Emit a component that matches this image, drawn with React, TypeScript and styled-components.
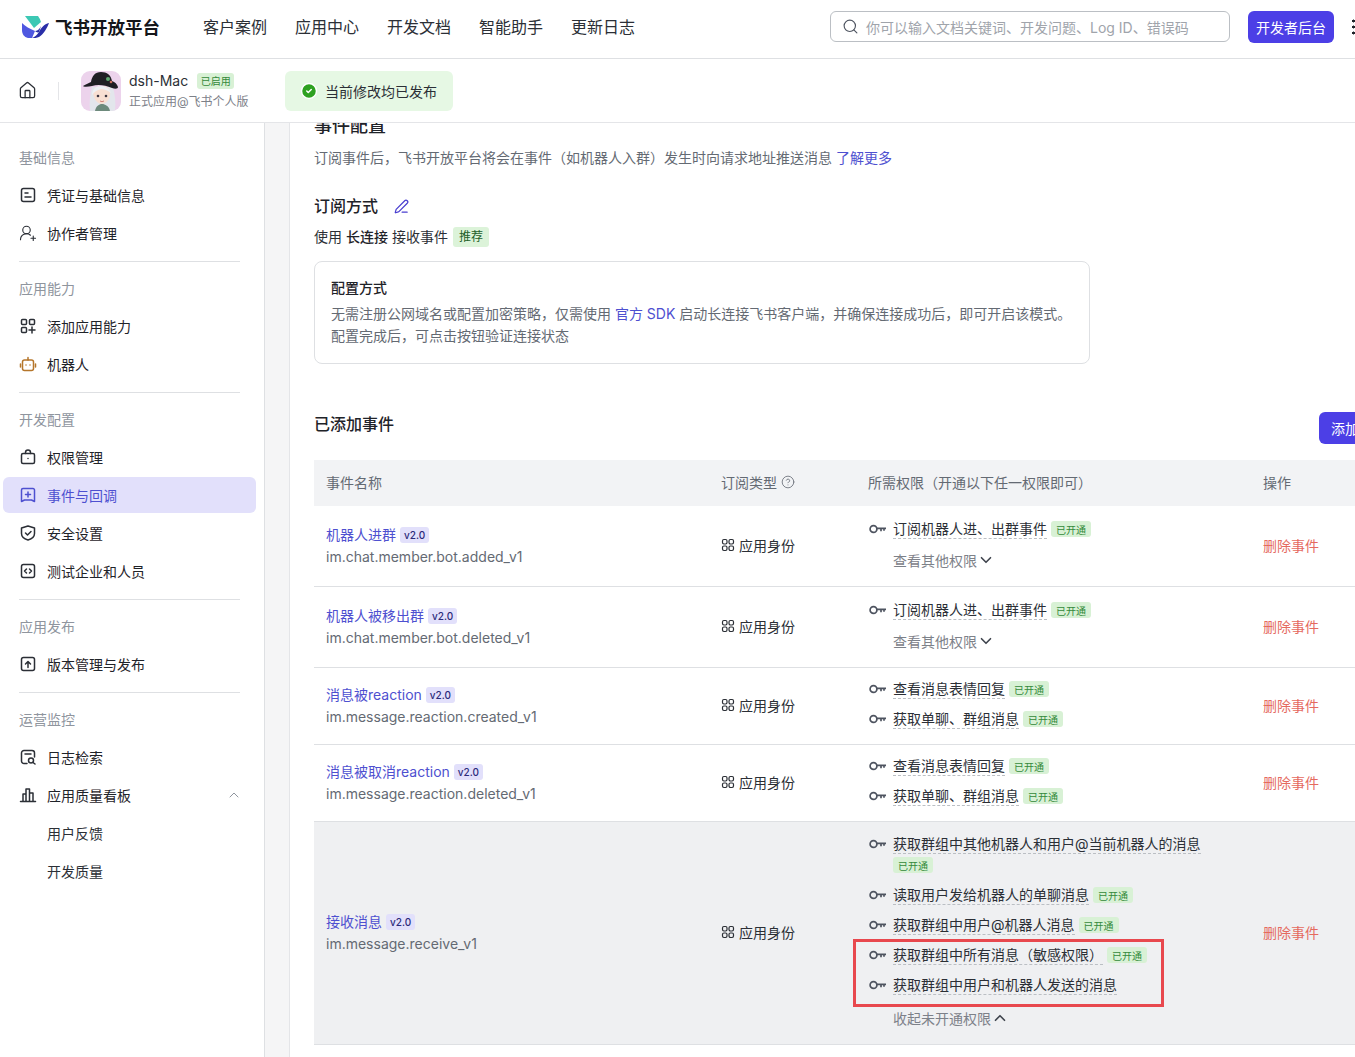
import React from "react";
import styled, { createGlobalStyle } from "styled-components";
import {
  Home,
  Search,
  CircleCheck,
  PenLine,
  CircleHelp,
  ChevronDown,
  ChevronUp,
  UserRoundPlus,
} from "lucide-react";

const FONT = `Inter, "Noto Sans CJK SC", "Noto Sans", sans-serif`;
const PRIMARY = "#4c3fe6";
const LINK = "#4e50d0";

const GlobalStyle = createGlobalStyle`
  html, body {
    margin: 0;
    padding: 0;
    height: 1057px;
    overflow: hidden;
    background: #fff;
    font-family: ${FONT};
    color: #1f2329;
  }
  * { box-sizing: border-box; }
`;

const Page = styled.div`
  width: 1355px;
  height: 1057px;
  display: flex;
  flex-direction: column;
  overflow: hidden;
`;

const TopBar = styled.header`
  height: 59px;
  flex: none;
  display: flex;
  align-items: center;
  padding: 0 0 5px 22px;
  border-bottom: 1px solid #dee0e3;
  white-space: nowrap;
`;

const Brand = styled.div`
  display: flex;
  align-items: center;
  gap: 6px;
  width: 181px;
  font-size: 17.5px;
  font-weight: 700;
  color: #14161a;
`;

const NavLinks = styled.nav`
  display: flex;
  gap: 28px;
  font-size: 16px;
  color: #2b2f36;
  margin-top: -1px;
`;

const SearchBox = styled.div`
  margin-left: auto;
  width: 400px;
  height: 31px;
  border: 1px solid #bbbfc4;
  border-radius: 6px;
  display: flex;
  align-items: center;
  gap: 7px;
  padding-left: 11px;
  font-size: 14px;
  color: #a0a4ab;
`;

const PrimaryButton = styled.div`
  background: ${PRIMARY};
  color: #fff;
  border-radius: 6px;
  font-size: 14px;
  display: flex;
  align-items: center;
  justify-content: center;
`;

const ConsoleButton = styled(PrimaryButton)`
  margin-left: 18px;
  width: 86px;
  height: 32px;
  flex: none;
`;

const MoreDots = styled.div`
  margin-left: 18px;
  width: 3px;
  height: 17px;
  flex: none;
  background: radial-gradient(circle, #1f2329 1.4px, transparent 1.6px) 0 0 / 3px 6px repeat-y;
`;

const AppBar = styled.div`
  height: 64px;
  flex: none;
  display: flex;
  align-items: center;
  padding-left: 18px;
  border-bottom: 1px solid #e4e5e8;
`;

const BarDivider = styled.div`
  width: 1px;
  height: 18px;
  background: #e4e5e8;
  margin: 0 22px 0 21px;
`;

const AppInfo = styled.div`
  display: flex;
  flex-direction: column;
  gap: 2px;
  margin-left: 8px;
  width: 156px;
`;

const AppName = styled.div`
  display: flex;
  align-items: center;
  gap: 9px;
  font-size: 14px;
  line-height: 20px;
  color: #2b2f36;
`;

const GreenTag = styled.span`
  display: inline-flex;
  align-items: center;
  justify-content: center;
  flex: none;
  height: 16px;
  padding: 0 5px;
  border-radius: 3px;
  background: #d8f1d5;
  color: #34893a;
  font-size: 10px;
  font-weight: 400;
`;

const StatusTag = styled(GreenTag)`
  padding: 0 3.5px;
`;

const AppSub = styled.div`
  font-size: 12px;
  line-height: 18px;
  color: #7d8189;
`;

const PublishNotice = styled.div`
  width: 168px;
  height: 40px;
  display: flex;
  align-items: center;
  gap: 7px;
  padding-left: 15px;
  border-radius: 6px;
  background: #e6f8e4;
  font-size: 14px;
  color: #2b2f36;
`;

const Body = styled.div`
  flex: 1;
  display: flex;
  min-height: 0;
`;

const Sidebar = styled.aside`
  width: 265px;
  flex: none;
  border-right: 1px solid #dee0e3;
  padding: 15px 8px 0 3px;
`;

const Gutter = styled.div`
  width: 25px;
  flex: none;
  background: #f5f5f6;
  border-right: 1px solid #e4e5e8;
`;

const SectionTitle = styled.div`
  height: 38px;
  margin-bottom: 1px;
  padding-left: 16px;
  display: flex;
  align-items: center;
  font-size: 14px;
  color: #8f959e;
`;

const SideItem = styled.div<{ $active?: boolean }>`
  height: 36px;
  margin-bottom: 2px;
  padding-left: 16px;
  display: flex;
  align-items: center;
  gap: 10px;
  border-radius: 6px;
  font-size: 14px;
  color: ${(p) => (p.$active ? LINK : "#1f2329")};
  background: ${(p) => (p.$active ? "#e2e0fb" : "transparent")};
  svg { flex: none; }
`;

const SubItem = styled(SideItem)`
  padding-left: 44px;
  color: #2b2f36;
`;

const Collapse = styled.span`
  margin-left: auto;
  margin-right: 14px;
  display: flex;
  color: #8f959e;
`;

const SideDivider = styled.div`
  height: 1px;
  margin: 10px 16px 0;
  background: #dee0e3;
  & + ${SectionTitle} { margin-top: 7px; }
`;

const Main = styled.main`
  flex: 1;
  min-width: 0;
  overflow: hidden;
  padding-left: 24px;
`;

const PageTitle = styled.h2`
  margin: -11px 0 0;
  font-size: 18px;
  line-height: 28px;
  font-weight: 500;
  color: #1f2329;
`;

const Lead = styled.p`
  margin: 7px 0 0;
  font-size: 14px;
  line-height: 22px;
  color: #646a73;
`;

const A = styled.span`
  color: ${LINK};
`;

const SubHeading = styled.div`
  margin-top: 25px;
  display: flex;
  align-items: center;
  gap: 16px;
  font-size: 16px;
  line-height: 24px;
  font-weight: 500;
  color: #1f2329;
`;

const ModeLine = styled.div`
  margin-top: 8px;
  display: flex;
  align-items: center;
  gap: 4px;
  font-size: 14px;
  line-height: 22px;
  color: #2b2f36;
  b { font-weight: 500; color: #1f2329; }
`;

const RecommendTag = styled.span`
  height: 20px;
  margin-left: 1px;
  padding: 0 6px;
  border-radius: 3px;
  background: #dcf3d9;
  color: #1f5f2b;
  font-size: 12px;
  display: inline-flex;
  align-items: center;
`;

const InfoCard = styled.div`
  margin-top: 13px;
  width: 776px;
  height: 103px;
  padding: 16px;
  border: 1px solid #dee0e3;
  border-radius: 8px;
`;

const CardTitle = styled.div`
  font-size: 14px;
  line-height: 20px;
  font-weight: 500;
  color: #1f2329;
`;

const CardText = styled.div`
  margin-top: 5px;
  font-size: 14px;
  line-height: 22px;
  color: #646a73;
  white-space: nowrap;
`;

const AddedRow = styled.div`
  margin-top: 48px;
  height: 32px;
  display: flex;
  align-items: center;
  justify-content: space-between;
`;

const AddedTitle = styled.div`
  font-size: 16px;
  font-weight: 500;
  color: #1f2329;
  margin-top: -10px;
`;

const AddButton = styled(PrimaryButton)`
  width: 100px;
  height: 32px;
  flex: none;
  justify-content: flex-start;
  padding-left: 12px;
  margin-right: -64px;
`;

const Table = styled.div`
  margin-top: 16px;
  width: 1041px;
`;

const Columns = styled.div<{ $head?: boolean; $hl?: boolean; $h?: number }>`
  display: grid;
  grid-template-columns: 395px 147px 395px 1fr;
  align-items: center;
  height: ${(p) => p.$h ?? 46}px;
  background: ${(p) => (p.$head ? "#f2f3f5" : p.$hl ? "#eff0f2" : "#fff")};
  border-bottom: ${(p) => (p.$head ? "none" : "1px solid #dee0e3")};
  ${(p) => (p.$head ? "font-size: 14px; color: #646a73; padding-bottom: 2px;" : "")}
`;

const HeadCell = styled.div`
  padding-left: 12px;
  display: flex;
  align-items: center;
  gap: 4px;
  white-space: nowrap;
`;

const EventCell = styled.div`
  padding-left: 12px;
`;

const EventName = styled.div`
  display: flex;
  align-items: center;
  gap: 4px;
  font-size: 14px;
  line-height: 22px;
  color: ${LINK};
`;

const VersionTag = styled.span`
  height: 16px;
  padding: 0 4px;
  border-radius: 3px;
  background: #e2e0fb;
  color: #2c2a7a;
  font-size: 10px;
  font-weight: 500;
  display: inline-flex;
  align-items: center;
`;

const EventKey = styled.div`
  font-size: 14px;
  line-height: 22px;
  color: #646a73;
`;

const Identity = styled.div`
  display: flex;
  align-items: center;
  gap: 4px;
  padding-left: 12px;
  margin-bottom: 2px;
  font-size: 14px;
  color: #2b2f36;
`;

const PermCell = styled.div<{ $short?: boolean }>`
  position: relative;
  display: flex;
  flex-direction: column;
  align-self: stretch;
  justify-content: center;
  padding: 0 0 ${(p) => (p.$short ? 4 : 2)}px 13px;
`;

const KeyIcon = styled.span`
  display: flex;
  width: 18px;
  flex: none;
`;

const PermRow = styled.div<{ $wrap?: boolean }>`
  display: flex;
  align-items: ${(p) => (p.$wrap ? "flex-start" : "center")};
  gap: 6px;
  height: ${(p) => (p.$wrap ? 50 : 30)}px;
  padding-top: ${(p) => (p.$wrap ? 4 : 0)}px;
  font-size: 14px;
  color: #2b2f36;
  white-space: nowrap;
  ${(p) => (p.$wrap ? "& > span:first-child { margin-top: 5px; }" : "")}
`;

const PermText = styled.span`
  border-bottom: 1px dashed #bbbfc4;
  line-height: 19px;
`;

const RowTag = styled(GreenTag)`
  margin-left: -2px;
`;

const PermWrap = styled.div`
  display: flex;
  flex-direction: column;
  gap: 3px;
  align-items: flex-start;
`;

const MoreLink = styled.div<{ $open?: boolean }>`
  display: flex;
  align-items: center;
  padding-left: 24px;
  height: 32px;
  margin-top: ${(p) => (p.$open ? 2 : 0)}px;
  font-size: 14px;
  color: #7d8189;
  svg { color: #3f444d; }
`;

const Delete = styled.div`
  padding-left: 12px;
  margin-bottom: 2px;
  font-size: 14px;
  color: #e56a5f;
`;

// annotation drawn over the screenshot
const RedMark = styled.div`
  position: absolute;
  left: -3px;
  top: 117px;
  width: 311px;
  height: 68px;
  border: 3px solid #e8484e;
  pointer-events: none;
`;

const Ic = ({ children, size = 18, color = "#2b2f36" }: { children: React.ReactNode; size?: number; color?: string }) => (
  <svg width={size} height={size} viewBox="0 0 18 18" fill="none" stroke={color} strokeWidth={1.5} strokeLinecap="round" strokeLinejoin="round">
    {children}
  </svg>
);

const Logo = () => (
  <svg width="27" height="22" viewBox="0 0 27 22">
    <path d="M3 0h13c1.500 2 2.500 4 3 6l-7 6z" fill="#3cc8b4" />
    <path d="M0 7c3 3 8 6 13 8l-3 7H6c-4-1-6-4-6-8z" fill="#4f58e0" />
    <path d="M10 22c3-1 5-3 7-6 2-4 5-8 10-9-2 5-5 11-10 14-2 1-5 1-7 1z" fill="#2a2fa8" />
    <path d="M13 15c2 0 4-1 6-5l-2 6c-1 1-3 0-4-1z" fill="#2a2fa8" />
  </svg>
);

const Avatar = () => (
  <svg width="40" height="40" viewBox="0 0 40 40">
    <defs>
      <clipPath id="av"><rect width="40" height="40" rx="9" /></clipPath>
    </defs>
    <g clipPath="url(#av)">
      <rect width="40" height="40" fill="#ecd3ec" />
      <path d="M9 40c-1-8 0-16 2-24h21c2 8 3 16 2 24z" fill="#e3e6ec" />
      <path d="M14 40c1-5 4-7 7-7s7 2 8 7z" fill="#6d8a7c" />
      <path d="M12 20c2-4 6-5 9-5s7 1 8 5c1 6-2 12-8 13-5 0-9-6-9-13z" fill="#f8dfd2" />
      <path d="M11 24c0-5 3-9 9-9 4 0 8 2 10 7-4-3-7-4-10-4-4 1-7 3-9 6z" fill="#eef0f4" />
      <path d="M2 15c3-2 6-3 8-4C11 5 14 1 20 1c6 0 10 3 11 9 3 1 5 3 6 6 0 2-3 2-6 1-7-3-14-4-20-2-4 1-9 1-9 0z" fill="#1f1f24" />
      <circle cx="27" cy="8" r="2" fill="#5ea870" />
      <circle cx="30" cy="11" r="1.300" fill="#c96f5a" />
      <circle cx="17" cy="25" r="1.300" fill="#3b3540" />
      <circle cx="25" cy="25" r="1.300" fill="#3b3540" />
      <path d="M19 30q2 1.400 4 0" stroke="#c9766f" strokeWidth=".9" fill="none" />
    </g>
  </svg>
);

const Key = () => (
  <KeyIcon>
    <svg width="18" height="10" viewBox="0 0 18 10" fill="none" stroke="#4e5460" strokeWidth="1.7">
      <circle cx="4.500" cy="5" r="3.400" />
      <path d="M8 4.300h9M12 4.300v3M15 4.300v2.400" />
    </svg>
  </KeyIcon>
);

const AppIdentityIcon = () => (
  <svg width="14" height="14" viewBox="0 0 14 14" fill="none" stroke="#2b2f36" strokeWidth="1.2">
    <rect x="1.500" y="1.500" width="4.500" height="4.500" rx="1.400" />
    <rect x="8" y="1.500" width="4.500" height="4.500" rx="1.400" />
    <rect x="1.500" y="8" width="4.500" height="4.500" rx="1.400" />
    <rect x="8" y="8" width="4.500" height="4.500" rx="1.400" />
  </svg>
);

const Perm = ({ text, opened, wrap }: { text: string; opened?: boolean; wrap?: boolean }) => (
  <PermRow $wrap={wrap}>
    <Key />
    {wrap ? (
      <PermWrap>
        <PermText>{text}</PermText>
        <GreenTag>已开通</GreenTag>
      </PermWrap>
    ) : (
      <>
        <PermText>{text}</PermText>
        {opened && <RowTag>已开通</RowTag>}
      </>
    )}
  </PermRow>
);

const EventRow = ({
  name,
  eventKey,
  h,
  hl,
  children,
}: {
  name: string;
  eventKey: string;
  h: number;
  hl?: boolean;
  children: React.ReactNode;
}) => (
  <Columns $h={h} $hl={hl}>
    <EventCell>
      <EventName>
        {name}
        <VersionTag>v2.0</VersionTag>
      </EventName>
      <EventKey>{eventKey}</EventKey>
    </EventCell>
    <Identity>
      <AppIdentityIcon />
      应用身份
    </Identity>
    <PermCell $short={h === 77}>{children}</PermCell>
    <Delete>删除事件</Delete>
  </Columns>
);

export default function App() {
  return (
    <Page>
      <GlobalStyle />
      <TopBar>
        <Brand>
          <Logo />
          飞书开放平台
        </Brand>
        <NavLinks>
          <span>客户案例</span>
          <span>应用中心</span>
          <span>开发文档</span>
          <span>智能助手</span>
          <span>更新日志</span>
        </NavLinks>
        <SearchBox>
          <Search size={17} color="#4e5460" strokeWidth={1.6} />
          你可以输入文档关键词、开发问题、Log ID、错误码
        </SearchBox>
        <ConsoleButton>开发者后台</ConsoleButton>
        <MoreDots />
      </TopBar>

      <AppBar>
        <Home size={19} color="#2b2f36" strokeWidth={1.6} />
        <BarDivider />
        <Avatar />
        <AppInfo>
          <AppName>
            dsh-Mac
            <StatusTag>已启用</StatusTag>
          </AppName>
          <AppSub>正式应用@飞书个人版</AppSub>
        </AppInfo>
        <PublishNotice>
          <CircleCheck size={18} color="#fff" fill="#2ea121" strokeWidth={2} />
          当前修改均已发布
        </PublishNotice>
      </AppBar>

      <Body>
        <Sidebar>
          <SectionTitle>基础信息</SectionTitle>
          <SideItem>
            <Ic><rect x="2.500" y="2.500" width="13" height="13" rx="2" /><path d="M6 7h3M6 11h6" /></Ic>
            凭证与基础信息
          </SideItem>
          <SideItem>
            <UserRoundPlus size={18} color="#2b2f36" strokeWidth={1.5} />
            协作者管理
          </SideItem>
          <SideDivider />
          <SectionTitle>应用能力</SectionTitle>
          <SideItem>
            <Ic>
              <rect x="2.500" y="2.500" width="5" height="5" rx="1" />
              <rect x="2.500" y="10.500" width="5" height="5" rx="1" />
              <rect x="10.500" y="2.500" width="5" height="5" rx="1" />
              <path d="M13 10v6M10 13h6" />
            </Ic>
            添加应用能力
          </SideItem>
          <SideItem>
            <Ic color="#b5762b">
              <rect x="3.500" y="5" width="11" height="10.500" rx="2" />
              <path d="M9 5V2.500M1.500 9v3M16.500 9v3M7 10h.01M11 10h.01" />
            </Ic>
            机器人
          </SideItem>
          <SideDivider />
          <SectionTitle>开发配置</SectionTitle>
          <SideItem>
            <Ic>
              <rect x="2.500" y="5.500" width="13" height="10" rx="1.500" />
              <path d="M6.500 5.500V4.500a2.500 2.500 0 0 1 5 0v1M9 10.500h.01" />
            </Ic>
            权限管理
          </SideItem>
          <SideItem $active>
            <Ic color={LINK}>
              <path d="M2.500 4a1.500 1.500 0 0 1 1.500-1.500h10a1.500 1.500 0 0 1 1.500 1.500v11.500l-3-1.500h-7l-3 1.500zM9 6v5M6.500 8.500h5" />
            </Ic>
            事件与回调
          </SideItem>
          <SideItem>
            <Ic>
              <path d="M9 2l6.500 2v5.500c0 3.500-3 5.500-6.500 6.500-3.500-1-6.500-3-6.500-6.500V4zM6.500 9l2 2 3.500-3.500" />
            </Ic>
            安全设置
          </SideItem>
          <SideItem>
            <Ic>
              <rect x="2.500" y="2.500" width="13" height="13" rx="2" />
              <path d="M7.500 7L5.500 9l2 2M10.500 7l2 2-2 2" />
            </Ic>
            测试企业和人员
          </SideItem>
          <SideDivider />
          <SectionTitle>应用发布</SectionTitle>
          <SideItem>
            <Ic>
              <rect x="2.500" y="2.500" width="13" height="13" rx="2" />
              <path d="M9 12.500V6.500M6.500 9L9 6.500 11.500 9" />
            </Ic>
            版本管理与发布
          </SideItem>
          <SideDivider />
          <SectionTitle>运营监控</SectionTitle>
          <SideItem>
            <Ic>
              <path d="M8 15.500H5a2.500 2.500 0 0 1-2.500-2.500V5A2.500 2.500 0 0 1 5 2.500h8A2.500 2.500 0 0 1 15.500 5v4M6 6h6" />
              <circle cx="12" cy="12.500" r="2.500" />
              <path d="M14 14.500l2 1.500" />
            </Ic>
            日志检索
          </SideItem>
          <SideItem>
            <Ic>
              <path d="M1.500 15.500h15M4 15.500V8h3v7.500M7 15.500V3h3.500v12.500M10.500 15.500V7h3.500v8.500" />
            </Ic>
            应用质量看板
            <Collapse>
              <ChevronUp size={16} strokeWidth={1.5} />
            </Collapse>
          </SideItem>
          <SubItem>用户反馈</SubItem>
          <SubItem>开发质量</SubItem>
        </Sidebar>
        <Gutter />
        <Main>
          <PageTitle>事件配置</PageTitle>
          <Lead>
            订阅事件后，飞书开放平台将会在事件（如机器人入群）发生时向请求地址推送消息 <A>了解更多</A>
          </Lead>
          <SubHeading>
            订阅方式
            <PenLine size={15} color="#4a3fd0" strokeWidth={2} />
          </SubHeading>
          <ModeLine>
            使用 <b>长连接</b> 接收事件 <RecommendTag>推荐</RecommendTag>
          </ModeLine>
          <InfoCard>
            <CardTitle>配置方式</CardTitle>
            <CardText>
              无需注册公网域名或配置加密策略，仅需使用 <A>官方 SDK</A> 启动长连接飞书客户端，并确保连接成功后，即可开启该模式。
              <br />
              配置完成后，可点击按钮验证连接状态
            </CardText>
          </InfoCard>
          <AddedRow>
            <AddedTitle>已添加事件</AddedTitle>
            <AddButton>添加事件</AddButton>
          </AddedRow>
          <Table>
            <Columns $head>
              <HeadCell>事件名称</HeadCell>
              <HeadCell>
                订阅类型 <CircleHelp size={14} strokeWidth={1.4} />
              </HeadCell>
              <HeadCell>所需权限（开通以下任一权限即可）</HeadCell>
              <HeadCell>操作</HeadCell>
            </Columns>
            <EventRow name="机器人进群" eventKey="im.chat.member.bot.added_v1" h={81}>
              <Perm text="订阅机器人进、出群事件" opened />
              <MoreLink>查看其他权限 <ChevronDown size={18} strokeWidth={2.2} /></MoreLink>
            </EventRow>
            <EventRow name="机器人被移出群" eventKey="im.chat.member.bot.deleted_v1" h={81}>
              <Perm text="订阅机器人进、出群事件" opened />
              <MoreLink>查看其他权限 <ChevronDown size={18} strokeWidth={2.2} /></MoreLink>
            </EventRow>
            <EventRow name="消息被reaction" eventKey="im.message.reaction.created_v1" h={77}>
              <Perm text="查看消息表情回复" opened />
              <Perm text="获取单聊、群组消息" opened />
            </EventRow>
            <EventRow name="消息被取消reaction" eventKey="im.message.reaction.deleted_v1" h={77}>
              <Perm text="查看消息表情回复" opened />
              <Perm text="获取单聊、群组消息" opened />
            </EventRow>
            <EventRow name="接收消息" eventKey="im.message.receive_v1" h={223} hl>
              <Perm text="获取群组中其他机器人和用户@当前机器人的消息" wrap />
              <Perm text="读取用户发给机器人的单聊消息" opened />
              <Perm text="获取群组中用户@机器人消息" opened />
              <Perm text="获取群组中所有消息（敏感权限）" opened />
              <Perm text="获取群组中用户和机器人发送的消息" />
              <MoreLink $open>收起未开通权限 <ChevronUp size={18} strokeWidth={2.2} /></MoreLink>
              <RedMark />
            </EventRow>
          </Table>
        </Main>
      </Body>
    </Page>
  );
}
